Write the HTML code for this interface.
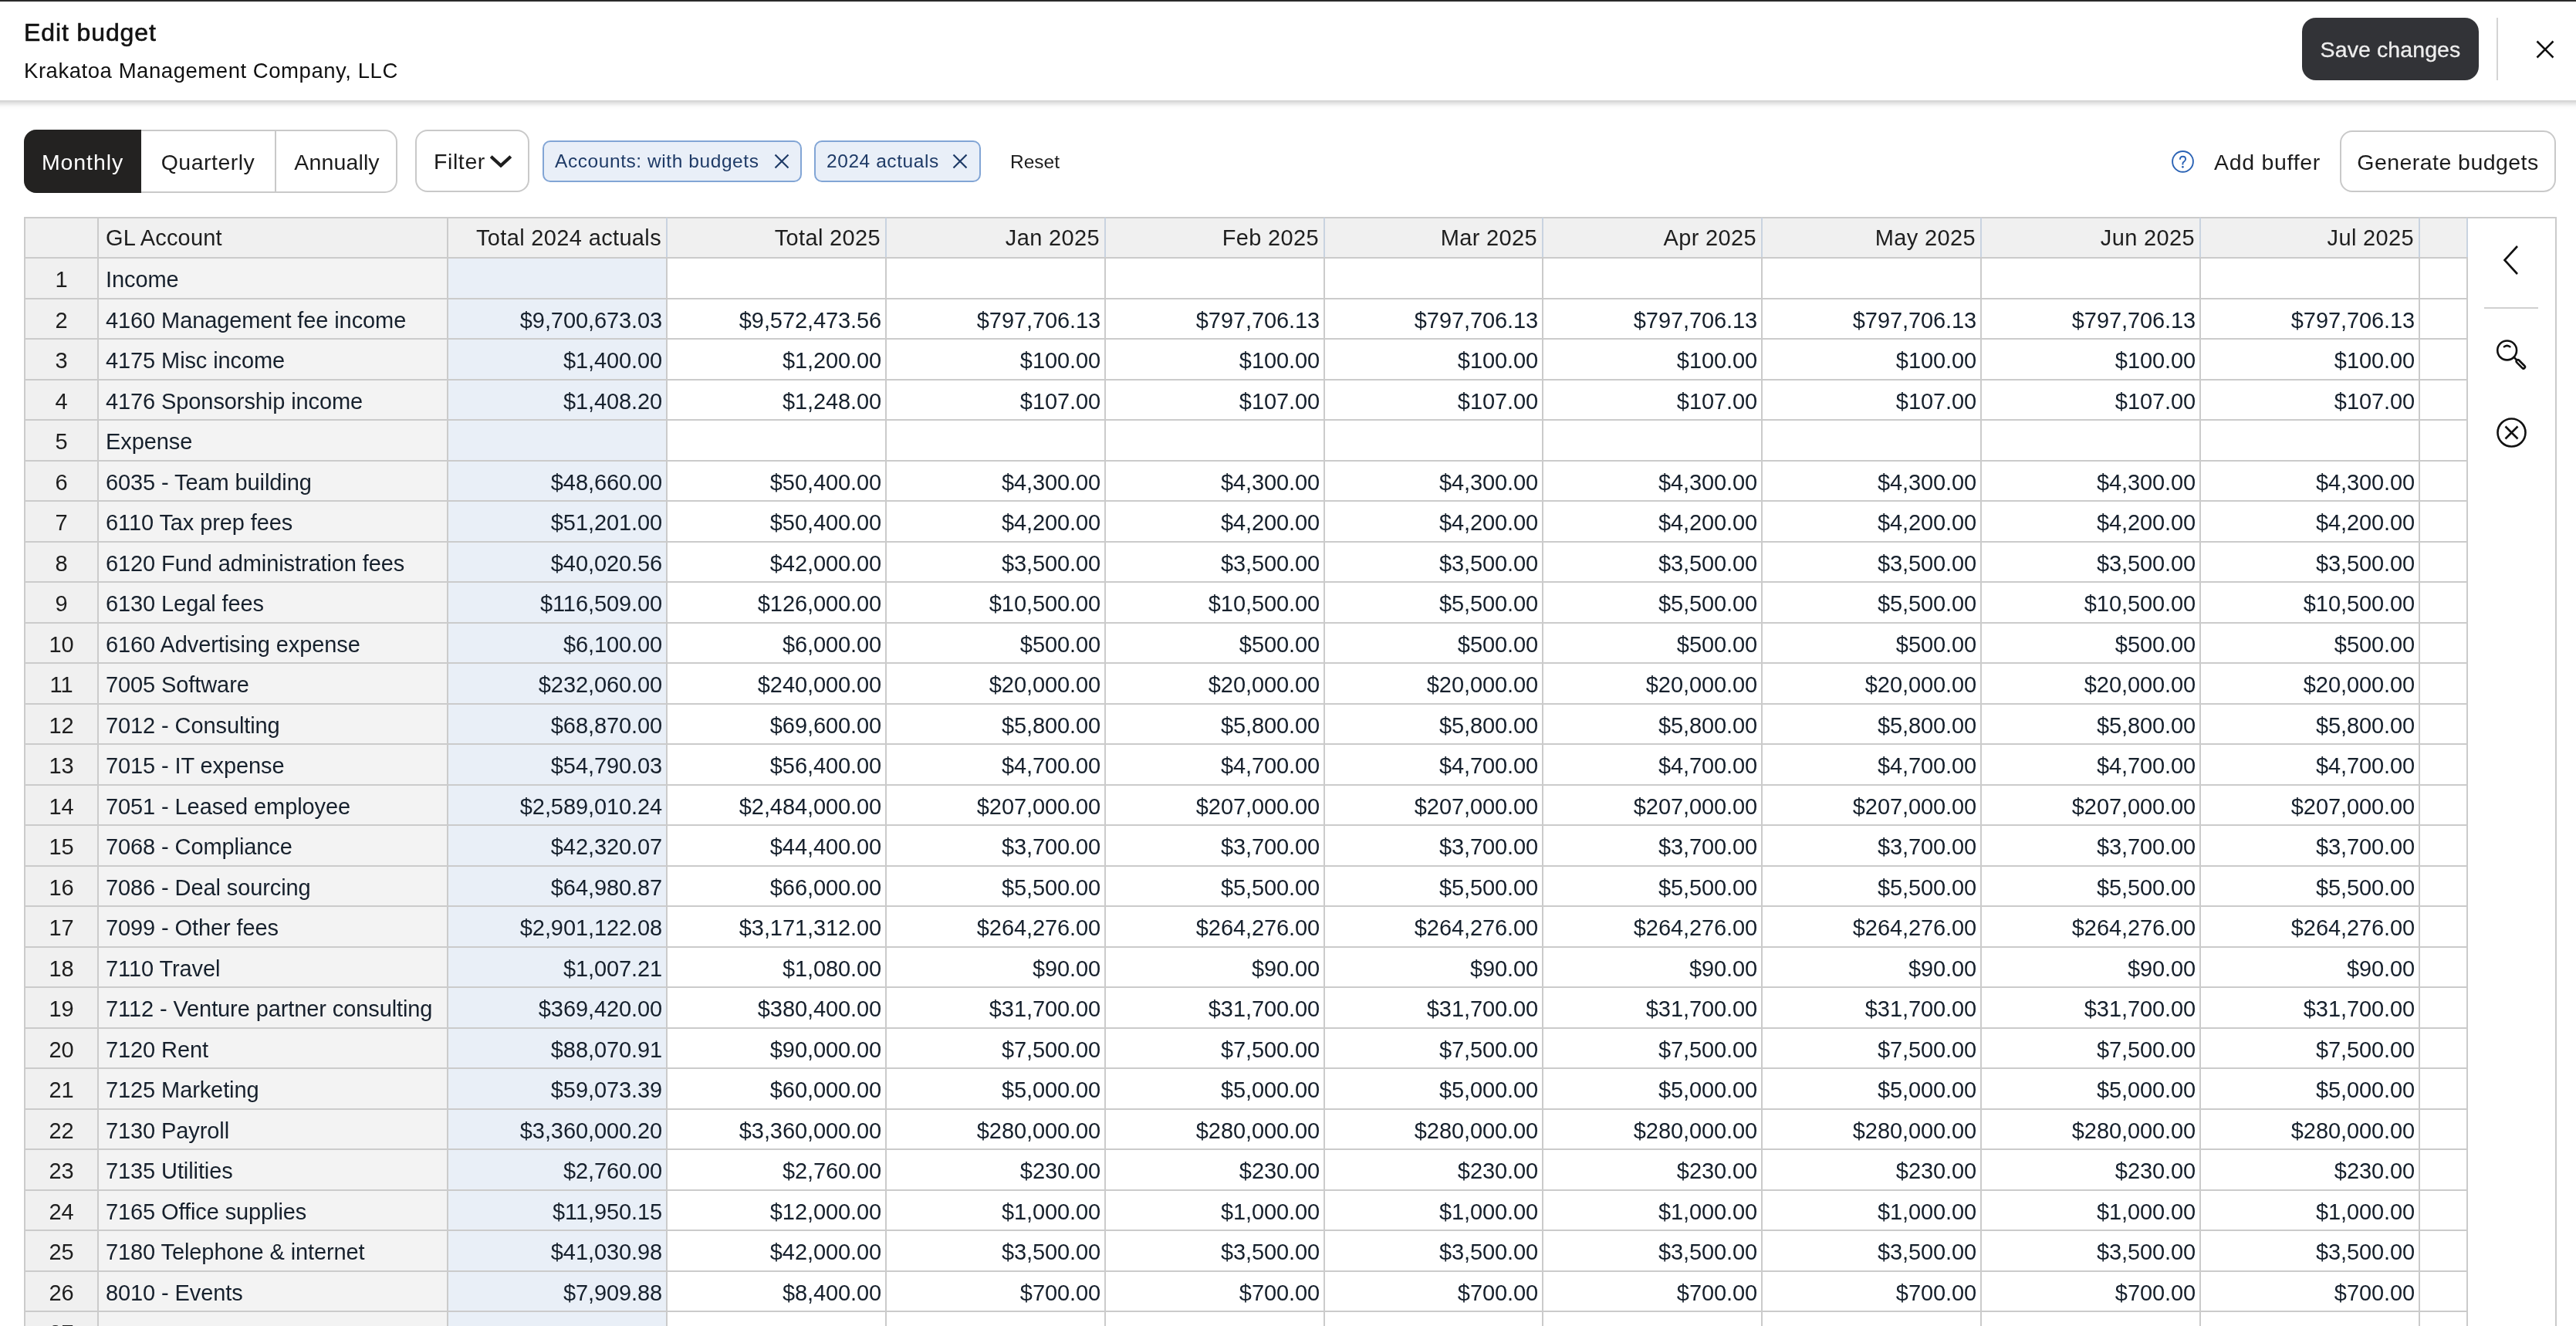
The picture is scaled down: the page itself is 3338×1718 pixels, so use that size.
<!DOCTYPE html><html><head><meta charset="utf-8"><title>Edit budget</title><style>
html,body{margin:0;padding:0;}
body{width:3338px;height:1718px;overflow:hidden;background:#fff;position:relative;font-family:"Liberation Sans",sans-serif;color:#1c1c1c;}
.topbar{position:absolute;left:0;top:0;width:3338px;height:2px;background:#2a2a2a;z-index:3}
.hdr{position:absolute;left:-30px;top:0;width:3398px;height:130px;background:#fff;box-shadow:0 3px 8px rgba(0,0,0,0.24);z-index:2}
.title{position:absolute;left:61px;top:22px;font-size:32px;line-height:40px;color:#111;-webkit-text-stroke:0.6px #111;letter-spacing:0.9px;white-space:nowrap}
.subtitle{position:absolute;left:61px;top:74px;font-size:27.5px;line-height:36px;color:#111;letter-spacing:0.55px;white-space:nowrap}
.savebtn{position:absolute;left:3013px;top:23px;width:229px;height:81px;border-radius:18px;background:#323337;color:#eee;font-size:28.5px;line-height:83px;-webkit-text-stroke:0.3px #eee;text-align:center;letter-spacing:0.1px;white-space:nowrap}
.vdiv{position:absolute;left:3265px;top:23px;width:2px;height:81px;background:#d4d4d4}
.closex{position:absolute;left:3315px;top:51px}
.seg{position:absolute;left:31px;top:168px;width:484px;height:82px;box-sizing:border-box;border:2px solid #c9c9c9;border-radius:16px}
.segitem{position:absolute;top:0;height:78px;line-height:80px;box-sizing:border-box;text-align:center;font-size:28.5px;color:#1c1c1c;white-space:nowrap}
.segitem.active{background:#232221;color:#fff;top:-2px;left:-2px;height:82px;line-height:84px;width:152px;border-radius:16px 0 0 16px}
.segitem.bl{border-left:2px solid #c9c9c9}
.filterbtn{position:absolute;left:538px;top:168px;width:148px;height:81px;box-sizing:border-box;border:2px solid #c9c9c9;border-radius:16px;font-size:28.5px;color:#1c1c1c;letter-spacing:0.6px}
.filterbtn span{position:absolute;left:22px;top:0;line-height:79px}
.chip{position:absolute;top:182px;height:54px;box-sizing:border-box;border:2px solid #82a5d5;border-radius:10px;background:#e9eff8;color:#1e3a66}
.chip .ct{position:absolute;left:14px;top:0;line-height:49px;font-size:24.5px;letter-spacing:0.57px;white-space:nowrap}
.chip .cx{position:absolute;top:15px}
.reset{position:absolute;left:1309px;top:184px;line-height:52px;font-size:24.5px;color:#1c1c1c;letter-spacing:0px}
.help{position:absolute;left:2812px;top:193px}
.addbuf{position:absolute;left:2869px;top:169px;line-height:82px;font-size:28.5px;color:#1c1c1c;letter-spacing:0.7px;white-space:nowrap}
.genbtn{position:absolute;left:3032px;top:169px;width:280px;height:80px;box-sizing:border-box;border:2px solid #c9c9c9;border-radius:16px;font-size:28.5px;line-height:78px;text-align:center;color:#1c1c1c;letter-spacing:0.45px;white-space:nowrap}
.tbl{position:absolute;left:0;top:0;width:3338px;height:1718px;z-index:1}
.bg{position:absolute}
.cell{position:absolute;box-sizing:border-box;white-space:nowrap;font-size:29px;letter-spacing:-0.1px;display:flex;align-items:center;padding-top:4px}
.hl{padding-left:10px;color:#1e1e1e;letter-spacing:0.2px;padding-top:1px}
.hr{justify-content:flex-end;padding-right:7px;color:#1e1e1e;letter-spacing:0.35px;padding-top:1px}
.num{justify-content:center;color:#1e1e1e}
.lab{padding-left:10px;color:#16202c}
.val{justify-content:flex-end;padding-right:6px;color:#16202c}
.hl1{position:absolute;height:2px;background:#cbcbcb}
.vl1{position:absolute;width:2px;background:#cbcbcb}
.sico{position:absolute;z-index:2}

#root{position:absolute;left:0;top:0;width:3338px;height:1718px;overflow:hidden;will-change:transform;background:#fff}

</style></head><body><div id="root">
<div class="topbar"></div>
<div class="hdr">
  <div class="title">Edit budget</div>
  <div class="subtitle">Krakatoa Management Company, LLC</div>
  <div class="savebtn">Save changes</div>
  <div class="vdiv"></div>
  <svg class="closex" width="26" height="26" viewBox="0 0 26 26"><path d="M2.5 2.5 L23.5 23.5 M23.5 2.5 L2.5 23.5" stroke="#111" stroke-width="2.6" fill="none"/></svg>
</div>

<div class="seg">
  <div class="segitem active" style="letter-spacing:0.9px">Monthly</div>
  <div class="segitem" style="left:150px;width:173px;letter-spacing:0.5px">Quarterly</div>
  <div class="segitem bl" style="left:323px;width:159px;letter-spacing:0.15px">Annually</div>
</div>
<div class="filterbtn"><span>Filter</span><svg width="28" height="16" viewBox="0 0 28 16" style="position:absolute;left:95px;top:31px"><path d="M1.2 1.8 L14 13.6 L26.8 1.8" stroke="#1e1e1e" stroke-width="4.2" fill="none" stroke-linecap="butt" stroke-linejoin="miter"/></svg></div>
<div class="chip" style="left:703px;width:336px"><span class="ct">Accounts: with budgets</span><svg class="cx" style="left:298px" width="20" height="20" viewBox="0 0 20 20"><path d="M1.5 1.5 L18.5 18.5 M18.5 1.5 L1.5 18.5" stroke="#1e3a66" stroke-width="2.2" fill="none"/></svg></div>
<div class="chip" style="left:1055px;width:216px"><span class="ct">2024 actuals</span><svg class="cx" style="left:176.5px" width="20" height="20" viewBox="0 0 20 20"><path d="M1.5 1.5 L18.5 18.5 M18.5 1.5 L1.5 18.5" stroke="#1e3a66" stroke-width="2.2" fill="none"/></svg></div>
<div class="reset">Reset</div>
<svg class="help" width="32" height="32" viewBox="0 0 32 32"><circle cx="16.5" cy="16.4" r="13.4" stroke="#2b63b5" stroke-width="1.9" fill="none"/><path d="M12.9 13.7 C12.9 11.3 14.5 9.8 16.5 9.8 C18.6 9.8 20.1 11.3 20.1 13.2 C20.1 15.2 18.5 16 17.5 16.8 C16.7 17.4 16.4 18 16.4 19.2 L16.4 20.4" stroke="#2b63b5" stroke-width="1.9" fill="none"/><circle cx="16.4" cy="23.3" r="1.4" fill="#2b63b5"/></svg>
<div class="addbuf">Add buffer</div>
<div class="genbtn">Generate budgets</div>

<div class="tbl">
<div class="bg" style="left:32px;top:282px;width:95px;height:1436px;background:#f0f0f0"></div>
<div class="bg" style="left:127px;top:282px;width:453px;height:1436px;background:#f3f3f3"></div>
<div class="bg" style="left:580px;top:282px;width:284px;height:1436px;background:#e9eff7"></div>
<div class="bg" style="left:32px;top:282px;width:3165px;height:52px;background:#f0f0f0"></div>
<div class="cell hl" style="left:127px;top:282px;width:453px;height:52px">GL Account</div>
<div class="cell hr" style="left:580px;top:282px;width:284px;height:52px">Total 2024 actuals</div>
<div class="cell hr" style="left:864px;top:282px;width:284px;height:52px">Total 2025</div>
<div class="cell hr" style="left:1148px;top:282px;width:284px;height:52px">Jan 2025</div>
<div class="cell hr" style="left:1432px;top:282px;width:284px;height:52px">Feb 2025</div>
<div class="cell hr" style="left:1716px;top:282px;width:283px;height:52px">Mar 2025</div>
<div class="cell hr" style="left:1999px;top:282px;width:284px;height:52px">Apr 2025</div>
<div class="cell hr" style="left:2283px;top:282px;width:284px;height:52px">May 2025</div>
<div class="cell hr" style="left:2567px;top:282px;width:284px;height:52px">Jun 2025</div>
<div class="cell hr" style="left:2851px;top:282px;width:284px;height:52px">Jul 2025</div>
<div class="cell num" style="left:32px;top:334px;width:95px;height:53px">1</div>
<div class="cell lab" style="left:127px;top:334px;width:453px;height:53px">Income</div>
<div class="cell num" style="left:32px;top:387px;width:95px;height:52px">2</div>
<div class="cell lab" style="left:127px;top:387px;width:453px;height:52px">4160 Management fee income</div>
<div class="cell val" style="left:580px;top:387px;width:284px;height:52px">$9,700,673.03</div>
<div class="cell val" style="left:864px;top:387px;width:284px;height:52px">$9,572,473.56</div>
<div class="cell val" style="left:1148px;top:387px;width:284px;height:52px">$797,706.13</div>
<div class="cell val" style="left:1432px;top:387px;width:284px;height:52px">$797,706.13</div>
<div class="cell val" style="left:1716px;top:387px;width:283px;height:52px">$797,706.13</div>
<div class="cell val" style="left:1999px;top:387px;width:284px;height:52px">$797,706.13</div>
<div class="cell val" style="left:2283px;top:387px;width:284px;height:52px">$797,706.13</div>
<div class="cell val" style="left:2567px;top:387px;width:284px;height:52px">$797,706.13</div>
<div class="cell val" style="left:2851px;top:387px;width:284px;height:52px">$797,706.13</div>
<div class="cell num" style="left:32px;top:439px;width:95px;height:53px">3</div>
<div class="cell lab" style="left:127px;top:439px;width:453px;height:53px">4175 Misc income</div>
<div class="cell val" style="left:580px;top:439px;width:284px;height:53px">$1,400.00</div>
<div class="cell val" style="left:864px;top:439px;width:284px;height:53px">$1,200.00</div>
<div class="cell val" style="left:1148px;top:439px;width:284px;height:53px">$100.00</div>
<div class="cell val" style="left:1432px;top:439px;width:284px;height:53px">$100.00</div>
<div class="cell val" style="left:1716px;top:439px;width:283px;height:53px">$100.00</div>
<div class="cell val" style="left:1999px;top:439px;width:284px;height:53px">$100.00</div>
<div class="cell val" style="left:2283px;top:439px;width:284px;height:53px">$100.00</div>
<div class="cell val" style="left:2567px;top:439px;width:284px;height:53px">$100.00</div>
<div class="cell val" style="left:2851px;top:439px;width:284px;height:53px">$100.00</div>
<div class="cell num" style="left:32px;top:492px;width:95px;height:52px">4</div>
<div class="cell lab" style="left:127px;top:492px;width:453px;height:52px">4176 Sponsorship income</div>
<div class="cell val" style="left:580px;top:492px;width:284px;height:52px">$1,408.20</div>
<div class="cell val" style="left:864px;top:492px;width:284px;height:52px">$1,248.00</div>
<div class="cell val" style="left:1148px;top:492px;width:284px;height:52px">$107.00</div>
<div class="cell val" style="left:1432px;top:492px;width:284px;height:52px">$107.00</div>
<div class="cell val" style="left:1716px;top:492px;width:283px;height:52px">$107.00</div>
<div class="cell val" style="left:1999px;top:492px;width:284px;height:52px">$107.00</div>
<div class="cell val" style="left:2283px;top:492px;width:284px;height:52px">$107.00</div>
<div class="cell val" style="left:2567px;top:492px;width:284px;height:52px">$107.00</div>
<div class="cell val" style="left:2851px;top:492px;width:284px;height:52px">$107.00</div>
<div class="cell num" style="left:32px;top:544px;width:95px;height:53px">5</div>
<div class="cell lab" style="left:127px;top:544px;width:453px;height:53px">Expense</div>
<div class="cell num" style="left:32px;top:597px;width:95px;height:52px">6</div>
<div class="cell lab" style="left:127px;top:597px;width:453px;height:52px">6035 - Team building</div>
<div class="cell val" style="left:580px;top:597px;width:284px;height:52px">$48,660.00</div>
<div class="cell val" style="left:864px;top:597px;width:284px;height:52px">$50,400.00</div>
<div class="cell val" style="left:1148px;top:597px;width:284px;height:52px">$4,300.00</div>
<div class="cell val" style="left:1432px;top:597px;width:284px;height:52px">$4,300.00</div>
<div class="cell val" style="left:1716px;top:597px;width:283px;height:52px">$4,300.00</div>
<div class="cell val" style="left:1999px;top:597px;width:284px;height:52px">$4,300.00</div>
<div class="cell val" style="left:2283px;top:597px;width:284px;height:52px">$4,300.00</div>
<div class="cell val" style="left:2567px;top:597px;width:284px;height:52px">$4,300.00</div>
<div class="cell val" style="left:2851px;top:597px;width:284px;height:52px">$4,300.00</div>
<div class="cell num" style="left:32px;top:649px;width:95px;height:53px">7</div>
<div class="cell lab" style="left:127px;top:649px;width:453px;height:53px">6110 Tax prep fees</div>
<div class="cell val" style="left:580px;top:649px;width:284px;height:53px">$51,201.00</div>
<div class="cell val" style="left:864px;top:649px;width:284px;height:53px">$50,400.00</div>
<div class="cell val" style="left:1148px;top:649px;width:284px;height:53px">$4,200.00</div>
<div class="cell val" style="left:1432px;top:649px;width:284px;height:53px">$4,200.00</div>
<div class="cell val" style="left:1716px;top:649px;width:283px;height:53px">$4,200.00</div>
<div class="cell val" style="left:1999px;top:649px;width:284px;height:53px">$4,200.00</div>
<div class="cell val" style="left:2283px;top:649px;width:284px;height:53px">$4,200.00</div>
<div class="cell val" style="left:2567px;top:649px;width:284px;height:53px">$4,200.00</div>
<div class="cell val" style="left:2851px;top:649px;width:284px;height:53px">$4,200.00</div>
<div class="cell num" style="left:32px;top:702px;width:95px;height:52px">8</div>
<div class="cell lab" style="left:127px;top:702px;width:453px;height:52px">6120 Fund administration fees</div>
<div class="cell val" style="left:580px;top:702px;width:284px;height:52px">$40,020.56</div>
<div class="cell val" style="left:864px;top:702px;width:284px;height:52px">$42,000.00</div>
<div class="cell val" style="left:1148px;top:702px;width:284px;height:52px">$3,500.00</div>
<div class="cell val" style="left:1432px;top:702px;width:284px;height:52px">$3,500.00</div>
<div class="cell val" style="left:1716px;top:702px;width:283px;height:52px">$3,500.00</div>
<div class="cell val" style="left:1999px;top:702px;width:284px;height:52px">$3,500.00</div>
<div class="cell val" style="left:2283px;top:702px;width:284px;height:52px">$3,500.00</div>
<div class="cell val" style="left:2567px;top:702px;width:284px;height:52px">$3,500.00</div>
<div class="cell val" style="left:2851px;top:702px;width:284px;height:52px">$3,500.00</div>
<div class="cell num" style="left:32px;top:754px;width:95px;height:53px">9</div>
<div class="cell lab" style="left:127px;top:754px;width:453px;height:53px">6130 Legal fees</div>
<div class="cell val" style="left:580px;top:754px;width:284px;height:53px">$116,509.00</div>
<div class="cell val" style="left:864px;top:754px;width:284px;height:53px">$126,000.00</div>
<div class="cell val" style="left:1148px;top:754px;width:284px;height:53px">$10,500.00</div>
<div class="cell val" style="left:1432px;top:754px;width:284px;height:53px">$10,500.00</div>
<div class="cell val" style="left:1716px;top:754px;width:283px;height:53px">$5,500.00</div>
<div class="cell val" style="left:1999px;top:754px;width:284px;height:53px">$5,500.00</div>
<div class="cell val" style="left:2283px;top:754px;width:284px;height:53px">$5,500.00</div>
<div class="cell val" style="left:2567px;top:754px;width:284px;height:53px">$10,500.00</div>
<div class="cell val" style="left:2851px;top:754px;width:284px;height:53px">$10,500.00</div>
<div class="cell num" style="left:32px;top:807px;width:95px;height:52px">10</div>
<div class="cell lab" style="left:127px;top:807px;width:453px;height:52px">6160 Advertising expense</div>
<div class="cell val" style="left:580px;top:807px;width:284px;height:52px">$6,100.00</div>
<div class="cell val" style="left:864px;top:807px;width:284px;height:52px">$6,000.00</div>
<div class="cell val" style="left:1148px;top:807px;width:284px;height:52px">$500.00</div>
<div class="cell val" style="left:1432px;top:807px;width:284px;height:52px">$500.00</div>
<div class="cell val" style="left:1716px;top:807px;width:283px;height:52px">$500.00</div>
<div class="cell val" style="left:1999px;top:807px;width:284px;height:52px">$500.00</div>
<div class="cell val" style="left:2283px;top:807px;width:284px;height:52px">$500.00</div>
<div class="cell val" style="left:2567px;top:807px;width:284px;height:52px">$500.00</div>
<div class="cell val" style="left:2851px;top:807px;width:284px;height:52px">$500.00</div>
<div class="cell num" style="left:32px;top:859px;width:95px;height:53px">11</div>
<div class="cell lab" style="left:127px;top:859px;width:453px;height:53px">7005 Software</div>
<div class="cell val" style="left:580px;top:859px;width:284px;height:53px">$232,060.00</div>
<div class="cell val" style="left:864px;top:859px;width:284px;height:53px">$240,000.00</div>
<div class="cell val" style="left:1148px;top:859px;width:284px;height:53px">$20,000.00</div>
<div class="cell val" style="left:1432px;top:859px;width:284px;height:53px">$20,000.00</div>
<div class="cell val" style="left:1716px;top:859px;width:283px;height:53px">$20,000.00</div>
<div class="cell val" style="left:1999px;top:859px;width:284px;height:53px">$20,000.00</div>
<div class="cell val" style="left:2283px;top:859px;width:284px;height:53px">$20,000.00</div>
<div class="cell val" style="left:2567px;top:859px;width:284px;height:53px">$20,000.00</div>
<div class="cell val" style="left:2851px;top:859px;width:284px;height:53px">$20,000.00</div>
<div class="cell num" style="left:32px;top:912px;width:95px;height:52px">12</div>
<div class="cell lab" style="left:127px;top:912px;width:453px;height:52px">7012 - Consulting</div>
<div class="cell val" style="left:580px;top:912px;width:284px;height:52px">$68,870.00</div>
<div class="cell val" style="left:864px;top:912px;width:284px;height:52px">$69,600.00</div>
<div class="cell val" style="left:1148px;top:912px;width:284px;height:52px">$5,800.00</div>
<div class="cell val" style="left:1432px;top:912px;width:284px;height:52px">$5,800.00</div>
<div class="cell val" style="left:1716px;top:912px;width:283px;height:52px">$5,800.00</div>
<div class="cell val" style="left:1999px;top:912px;width:284px;height:52px">$5,800.00</div>
<div class="cell val" style="left:2283px;top:912px;width:284px;height:52px">$5,800.00</div>
<div class="cell val" style="left:2567px;top:912px;width:284px;height:52px">$5,800.00</div>
<div class="cell val" style="left:2851px;top:912px;width:284px;height:52px">$5,800.00</div>
<div class="cell num" style="left:32px;top:964px;width:95px;height:53px">13</div>
<div class="cell lab" style="left:127px;top:964px;width:453px;height:53px">7015 - IT expense</div>
<div class="cell val" style="left:580px;top:964px;width:284px;height:53px">$54,790.03</div>
<div class="cell val" style="left:864px;top:964px;width:284px;height:53px">$56,400.00</div>
<div class="cell val" style="left:1148px;top:964px;width:284px;height:53px">$4,700.00</div>
<div class="cell val" style="left:1432px;top:964px;width:284px;height:53px">$4,700.00</div>
<div class="cell val" style="left:1716px;top:964px;width:283px;height:53px">$4,700.00</div>
<div class="cell val" style="left:1999px;top:964px;width:284px;height:53px">$4,700.00</div>
<div class="cell val" style="left:2283px;top:964px;width:284px;height:53px">$4,700.00</div>
<div class="cell val" style="left:2567px;top:964px;width:284px;height:53px">$4,700.00</div>
<div class="cell val" style="left:2851px;top:964px;width:284px;height:53px">$4,700.00</div>
<div class="cell num" style="left:32px;top:1017px;width:95px;height:52px">14</div>
<div class="cell lab" style="left:127px;top:1017px;width:453px;height:52px">7051 - Leased employee</div>
<div class="cell val" style="left:580px;top:1017px;width:284px;height:52px">$2,589,010.24</div>
<div class="cell val" style="left:864px;top:1017px;width:284px;height:52px">$2,484,000.00</div>
<div class="cell val" style="left:1148px;top:1017px;width:284px;height:52px">$207,000.00</div>
<div class="cell val" style="left:1432px;top:1017px;width:284px;height:52px">$207,000.00</div>
<div class="cell val" style="left:1716px;top:1017px;width:283px;height:52px">$207,000.00</div>
<div class="cell val" style="left:1999px;top:1017px;width:284px;height:52px">$207,000.00</div>
<div class="cell val" style="left:2283px;top:1017px;width:284px;height:52px">$207,000.00</div>
<div class="cell val" style="left:2567px;top:1017px;width:284px;height:52px">$207,000.00</div>
<div class="cell val" style="left:2851px;top:1017px;width:284px;height:52px">$207,000.00</div>
<div class="cell num" style="left:32px;top:1069px;width:95px;height:53px">15</div>
<div class="cell lab" style="left:127px;top:1069px;width:453px;height:53px">7068 - Compliance</div>
<div class="cell val" style="left:580px;top:1069px;width:284px;height:53px">$42,320.07</div>
<div class="cell val" style="left:864px;top:1069px;width:284px;height:53px">$44,400.00</div>
<div class="cell val" style="left:1148px;top:1069px;width:284px;height:53px">$3,700.00</div>
<div class="cell val" style="left:1432px;top:1069px;width:284px;height:53px">$3,700.00</div>
<div class="cell val" style="left:1716px;top:1069px;width:283px;height:53px">$3,700.00</div>
<div class="cell val" style="left:1999px;top:1069px;width:284px;height:53px">$3,700.00</div>
<div class="cell val" style="left:2283px;top:1069px;width:284px;height:53px">$3,700.00</div>
<div class="cell val" style="left:2567px;top:1069px;width:284px;height:53px">$3,700.00</div>
<div class="cell val" style="left:2851px;top:1069px;width:284px;height:53px">$3,700.00</div>
<div class="cell num" style="left:32px;top:1122px;width:95px;height:52px">16</div>
<div class="cell lab" style="left:127px;top:1122px;width:453px;height:52px">7086 - Deal sourcing</div>
<div class="cell val" style="left:580px;top:1122px;width:284px;height:52px">$64,980.87</div>
<div class="cell val" style="left:864px;top:1122px;width:284px;height:52px">$66,000.00</div>
<div class="cell val" style="left:1148px;top:1122px;width:284px;height:52px">$5,500.00</div>
<div class="cell val" style="left:1432px;top:1122px;width:284px;height:52px">$5,500.00</div>
<div class="cell val" style="left:1716px;top:1122px;width:283px;height:52px">$5,500.00</div>
<div class="cell val" style="left:1999px;top:1122px;width:284px;height:52px">$5,500.00</div>
<div class="cell val" style="left:2283px;top:1122px;width:284px;height:52px">$5,500.00</div>
<div class="cell val" style="left:2567px;top:1122px;width:284px;height:52px">$5,500.00</div>
<div class="cell val" style="left:2851px;top:1122px;width:284px;height:52px">$5,500.00</div>
<div class="cell num" style="left:32px;top:1174px;width:95px;height:53px">17</div>
<div class="cell lab" style="left:127px;top:1174px;width:453px;height:53px">7099 - Other fees</div>
<div class="cell val" style="left:580px;top:1174px;width:284px;height:53px">$2,901,122.08</div>
<div class="cell val" style="left:864px;top:1174px;width:284px;height:53px">$3,171,312.00</div>
<div class="cell val" style="left:1148px;top:1174px;width:284px;height:53px">$264,276.00</div>
<div class="cell val" style="left:1432px;top:1174px;width:284px;height:53px">$264,276.00</div>
<div class="cell val" style="left:1716px;top:1174px;width:283px;height:53px">$264,276.00</div>
<div class="cell val" style="left:1999px;top:1174px;width:284px;height:53px">$264,276.00</div>
<div class="cell val" style="left:2283px;top:1174px;width:284px;height:53px">$264,276.00</div>
<div class="cell val" style="left:2567px;top:1174px;width:284px;height:53px">$264,276.00</div>
<div class="cell val" style="left:2851px;top:1174px;width:284px;height:53px">$264,276.00</div>
<div class="cell num" style="left:32px;top:1227px;width:95px;height:52px">18</div>
<div class="cell lab" style="left:127px;top:1227px;width:453px;height:52px">7110 Travel</div>
<div class="cell val" style="left:580px;top:1227px;width:284px;height:52px">$1,007.21</div>
<div class="cell val" style="left:864px;top:1227px;width:284px;height:52px">$1,080.00</div>
<div class="cell val" style="left:1148px;top:1227px;width:284px;height:52px">$90.00</div>
<div class="cell val" style="left:1432px;top:1227px;width:284px;height:52px">$90.00</div>
<div class="cell val" style="left:1716px;top:1227px;width:283px;height:52px">$90.00</div>
<div class="cell val" style="left:1999px;top:1227px;width:284px;height:52px">$90.00</div>
<div class="cell val" style="left:2283px;top:1227px;width:284px;height:52px">$90.00</div>
<div class="cell val" style="left:2567px;top:1227px;width:284px;height:52px">$90.00</div>
<div class="cell val" style="left:2851px;top:1227px;width:284px;height:52px">$90.00</div>
<div class="cell num" style="left:32px;top:1279px;width:95px;height:53px">19</div>
<div class="cell lab" style="left:127px;top:1279px;width:453px;height:53px">7112 - Venture partner consulting</div>
<div class="cell val" style="left:580px;top:1279px;width:284px;height:53px">$369,420.00</div>
<div class="cell val" style="left:864px;top:1279px;width:284px;height:53px">$380,400.00</div>
<div class="cell val" style="left:1148px;top:1279px;width:284px;height:53px">$31,700.00</div>
<div class="cell val" style="left:1432px;top:1279px;width:284px;height:53px">$31,700.00</div>
<div class="cell val" style="left:1716px;top:1279px;width:283px;height:53px">$31,700.00</div>
<div class="cell val" style="left:1999px;top:1279px;width:284px;height:53px">$31,700.00</div>
<div class="cell val" style="left:2283px;top:1279px;width:284px;height:53px">$31,700.00</div>
<div class="cell val" style="left:2567px;top:1279px;width:284px;height:53px">$31,700.00</div>
<div class="cell val" style="left:2851px;top:1279px;width:284px;height:53px">$31,700.00</div>
<div class="cell num" style="left:32px;top:1332px;width:95px;height:52px">20</div>
<div class="cell lab" style="left:127px;top:1332px;width:453px;height:52px">7120 Rent</div>
<div class="cell val" style="left:580px;top:1332px;width:284px;height:52px">$88,070.91</div>
<div class="cell val" style="left:864px;top:1332px;width:284px;height:52px">$90,000.00</div>
<div class="cell val" style="left:1148px;top:1332px;width:284px;height:52px">$7,500.00</div>
<div class="cell val" style="left:1432px;top:1332px;width:284px;height:52px">$7,500.00</div>
<div class="cell val" style="left:1716px;top:1332px;width:283px;height:52px">$7,500.00</div>
<div class="cell val" style="left:1999px;top:1332px;width:284px;height:52px">$7,500.00</div>
<div class="cell val" style="left:2283px;top:1332px;width:284px;height:52px">$7,500.00</div>
<div class="cell val" style="left:2567px;top:1332px;width:284px;height:52px">$7,500.00</div>
<div class="cell val" style="left:2851px;top:1332px;width:284px;height:52px">$7,500.00</div>
<div class="cell num" style="left:32px;top:1384px;width:95px;height:53px">21</div>
<div class="cell lab" style="left:127px;top:1384px;width:453px;height:53px">7125 Marketing</div>
<div class="cell val" style="left:580px;top:1384px;width:284px;height:53px">$59,073.39</div>
<div class="cell val" style="left:864px;top:1384px;width:284px;height:53px">$60,000.00</div>
<div class="cell val" style="left:1148px;top:1384px;width:284px;height:53px">$5,000.00</div>
<div class="cell val" style="left:1432px;top:1384px;width:284px;height:53px">$5,000.00</div>
<div class="cell val" style="left:1716px;top:1384px;width:283px;height:53px">$5,000.00</div>
<div class="cell val" style="left:1999px;top:1384px;width:284px;height:53px">$5,000.00</div>
<div class="cell val" style="left:2283px;top:1384px;width:284px;height:53px">$5,000.00</div>
<div class="cell val" style="left:2567px;top:1384px;width:284px;height:53px">$5,000.00</div>
<div class="cell val" style="left:2851px;top:1384px;width:284px;height:53px">$5,000.00</div>
<div class="cell num" style="left:32px;top:1437px;width:95px;height:52px">22</div>
<div class="cell lab" style="left:127px;top:1437px;width:453px;height:52px">7130 Payroll</div>
<div class="cell val" style="left:580px;top:1437px;width:284px;height:52px">$3,360,000.20</div>
<div class="cell val" style="left:864px;top:1437px;width:284px;height:52px">$3,360,000.00</div>
<div class="cell val" style="left:1148px;top:1437px;width:284px;height:52px">$280,000.00</div>
<div class="cell val" style="left:1432px;top:1437px;width:284px;height:52px">$280,000.00</div>
<div class="cell val" style="left:1716px;top:1437px;width:283px;height:52px">$280,000.00</div>
<div class="cell val" style="left:1999px;top:1437px;width:284px;height:52px">$280,000.00</div>
<div class="cell val" style="left:2283px;top:1437px;width:284px;height:52px">$280,000.00</div>
<div class="cell val" style="left:2567px;top:1437px;width:284px;height:52px">$280,000.00</div>
<div class="cell val" style="left:2851px;top:1437px;width:284px;height:52px">$280,000.00</div>
<div class="cell num" style="left:32px;top:1489px;width:95px;height:53px">23</div>
<div class="cell lab" style="left:127px;top:1489px;width:453px;height:53px">7135 Utilities</div>
<div class="cell val" style="left:580px;top:1489px;width:284px;height:53px">$2,760.00</div>
<div class="cell val" style="left:864px;top:1489px;width:284px;height:53px">$2,760.00</div>
<div class="cell val" style="left:1148px;top:1489px;width:284px;height:53px">$230.00</div>
<div class="cell val" style="left:1432px;top:1489px;width:284px;height:53px">$230.00</div>
<div class="cell val" style="left:1716px;top:1489px;width:283px;height:53px">$230.00</div>
<div class="cell val" style="left:1999px;top:1489px;width:284px;height:53px">$230.00</div>
<div class="cell val" style="left:2283px;top:1489px;width:284px;height:53px">$230.00</div>
<div class="cell val" style="left:2567px;top:1489px;width:284px;height:53px">$230.00</div>
<div class="cell val" style="left:2851px;top:1489px;width:284px;height:53px">$230.00</div>
<div class="cell num" style="left:32px;top:1542px;width:95px;height:52px">24</div>
<div class="cell lab" style="left:127px;top:1542px;width:453px;height:52px">7165 Office supplies</div>
<div class="cell val" style="left:580px;top:1542px;width:284px;height:52px">$11,950.15</div>
<div class="cell val" style="left:864px;top:1542px;width:284px;height:52px">$12,000.00</div>
<div class="cell val" style="left:1148px;top:1542px;width:284px;height:52px">$1,000.00</div>
<div class="cell val" style="left:1432px;top:1542px;width:284px;height:52px">$1,000.00</div>
<div class="cell val" style="left:1716px;top:1542px;width:283px;height:52px">$1,000.00</div>
<div class="cell val" style="left:1999px;top:1542px;width:284px;height:52px">$1,000.00</div>
<div class="cell val" style="left:2283px;top:1542px;width:284px;height:52px">$1,000.00</div>
<div class="cell val" style="left:2567px;top:1542px;width:284px;height:52px">$1,000.00</div>
<div class="cell val" style="left:2851px;top:1542px;width:284px;height:52px">$1,000.00</div>
<div class="cell num" style="left:32px;top:1594px;width:95px;height:53px">25</div>
<div class="cell lab" style="left:127px;top:1594px;width:453px;height:53px">7180 Telephone &amp; internet</div>
<div class="cell val" style="left:580px;top:1594px;width:284px;height:53px">$41,030.98</div>
<div class="cell val" style="left:864px;top:1594px;width:284px;height:53px">$42,000.00</div>
<div class="cell val" style="left:1148px;top:1594px;width:284px;height:53px">$3,500.00</div>
<div class="cell val" style="left:1432px;top:1594px;width:284px;height:53px">$3,500.00</div>
<div class="cell val" style="left:1716px;top:1594px;width:283px;height:53px">$3,500.00</div>
<div class="cell val" style="left:1999px;top:1594px;width:284px;height:53px">$3,500.00</div>
<div class="cell val" style="left:2283px;top:1594px;width:284px;height:53px">$3,500.00</div>
<div class="cell val" style="left:2567px;top:1594px;width:284px;height:53px">$3,500.00</div>
<div class="cell val" style="left:2851px;top:1594px;width:284px;height:53px">$3,500.00</div>
<div class="cell num" style="left:32px;top:1647px;width:95px;height:52px">26</div>
<div class="cell lab" style="left:127px;top:1647px;width:453px;height:52px">8010 - Events</div>
<div class="cell val" style="left:580px;top:1647px;width:284px;height:52px">$7,909.88</div>
<div class="cell val" style="left:864px;top:1647px;width:284px;height:52px">$8,400.00</div>
<div class="cell val" style="left:1148px;top:1647px;width:284px;height:52px">$700.00</div>
<div class="cell val" style="left:1432px;top:1647px;width:284px;height:52px">$700.00</div>
<div class="cell val" style="left:1716px;top:1647px;width:283px;height:52px">$700.00</div>
<div class="cell val" style="left:1999px;top:1647px;width:284px;height:52px">$700.00</div>
<div class="cell val" style="left:2283px;top:1647px;width:284px;height:52px">$700.00</div>
<div class="cell val" style="left:2567px;top:1647px;width:284px;height:52px">$700.00</div>
<div class="cell val" style="left:2851px;top:1647px;width:284px;height:52px">$700.00</div>
<div class="cell num" style="left:32px;top:1699px;width:95px;height:53px">27</div>
<div class="hl1" style="left:31px;top:281px;width:3166px"></div>
<div class="hl1" style="left:31px;top:333px;width:3166px"></div>
<div class="hl1" style="left:31px;top:386px;width:3166px"></div>
<div class="hl1" style="left:31px;top:438px;width:3166px"></div>
<div class="hl1" style="left:31px;top:491px;width:3166px"></div>
<div class="hl1" style="left:31px;top:543px;width:3166px"></div>
<div class="hl1" style="left:31px;top:596px;width:3166px"></div>
<div class="hl1" style="left:31px;top:648px;width:3166px"></div>
<div class="hl1" style="left:31px;top:701px;width:3166px"></div>
<div class="hl1" style="left:31px;top:753px;width:3166px"></div>
<div class="hl1" style="left:31px;top:806px;width:3166px"></div>
<div class="hl1" style="left:31px;top:858px;width:3166px"></div>
<div class="hl1" style="left:31px;top:911px;width:3166px"></div>
<div class="hl1" style="left:31px;top:963px;width:3166px"></div>
<div class="hl1" style="left:31px;top:1016px;width:3166px"></div>
<div class="hl1" style="left:31px;top:1068px;width:3166px"></div>
<div class="hl1" style="left:31px;top:1121px;width:3166px"></div>
<div class="hl1" style="left:31px;top:1173px;width:3166px"></div>
<div class="hl1" style="left:31px;top:1226px;width:3166px"></div>
<div class="hl1" style="left:31px;top:1278px;width:3166px"></div>
<div class="hl1" style="left:31px;top:1331px;width:3166px"></div>
<div class="hl1" style="left:31px;top:1383px;width:3166px"></div>
<div class="hl1" style="left:31px;top:1436px;width:3166px"></div>
<div class="hl1" style="left:31px;top:1488px;width:3166px"></div>
<div class="hl1" style="left:31px;top:1541px;width:3166px"></div>
<div class="hl1" style="left:31px;top:1593px;width:3166px"></div>
<div class="hl1" style="left:31px;top:1646px;width:3166px"></div>
<div class="hl1" style="left:31px;top:1698px;width:3166px"></div>
<div class="vl1" style="left:31px;top:281px;height:1437px"></div>
<div class="vl1" style="left:126px;top:281px;height:1437px"></div>
<div class="vl1" style="left:579px;top:281px;height:1437px"></div>
<div class="vl1" style="left:863px;top:281px;height:1437px"></div>
<div class="vl1" style="left:1147px;top:281px;height:1437px"></div>
<div class="vl1" style="left:1431px;top:281px;height:1437px"></div>
<div class="vl1" style="left:1715px;top:281px;height:1437px"></div>
<div class="vl1" style="left:1998px;top:281px;height:1437px"></div>
<div class="vl1" style="left:2282px;top:281px;height:1437px"></div>
<div class="vl1" style="left:2566px;top:281px;height:1437px"></div>
<div class="vl1" style="left:2850px;top:281px;height:1437px"></div>
<div class="vl1" style="left:3134px;top:281px;height:1437px"></div>
<div class="vl1" style="left:3196px;top:281px;height:1437px"></div>
<div class="vl1" style="left:863px;top:282px;height:51px;background:#c9d3e0"></div>
<div class="vl1" style="left:1147px;top:282px;height:51px;background:#c9d3e0"></div>
<div class="vl1" style="left:1431px;top:282px;height:51px;background:#c9d3e0"></div>
<div class="vl1" style="left:1715px;top:282px;height:51px;background:#c9d3e0"></div>
<div class="vl1" style="left:1998px;top:282px;height:51px;background:#c9d3e0"></div>
<div class="vl1" style="left:2282px;top:282px;height:51px;background:#c9d3e0"></div>
<div class="vl1" style="left:2566px;top:282px;height:51px;background:#c9d3e0"></div>
<div class="vl1" style="left:2850px;top:282px;height:51px;background:#c9d3e0"></div>
<div class="vl1" style="left:3134px;top:282px;height:51px;background:#c9d3e0"></div>
<div class="vl1" style="left:3196px;top:282px;height:51px;background:#c9d3e0"></div>
<div class="hl1" style="left:3197px;top:281px;width:116px"></div>
<div class="vl1" style="left:3311px;top:281px;height:1437px"></div>
</div>
<svg class="sico" style="left:3236px;top:312px" width="36" height="50" viewBox="0 0 36 50"><path d="M26 7 L9.5 25 L26 43" stroke="#111" stroke-width="2.6" fill="none"/></svg>
<div style="position:absolute;left:3219px;top:398px;width:70px;height:2px;background:#d0d0d0"></div>
<svg class="sico" style="left:3228px;top:432px" width="52" height="52" viewBox="0 0 52 52"><circle cx="20.65" cy="21.95" r="12.4" stroke="#111" stroke-width="2.6" fill="none"/><path d="M16.9 17.2 Q20.6 14.6 24.4 17.2" stroke="#111" stroke-width="2.6" fill="none" stroke-linecap="round"/><path d="M29.4 30.7 L33.2 34.5" stroke="#111" stroke-width="2.6" fill="none"/><rect x="-7.1" y="-2" width="14.2" height="4" rx="2" transform="translate(38.3 39.8) rotate(45)" stroke="#111" stroke-width="2.6" fill="none"/></svg>
<svg class="sico" style="left:3232px;top:538px" width="46" height="46" viewBox="0 0 46 46"><circle cx="22.5" cy="22.5" r="18" stroke="#111" stroke-width="2.6" fill="none"/><path d="M14.5 14.5 L30.5 30.5 M30.5 14.5 L14.5 30.5" stroke="#111" stroke-width="2.6" fill="none"/></svg>

</div></body></html>
